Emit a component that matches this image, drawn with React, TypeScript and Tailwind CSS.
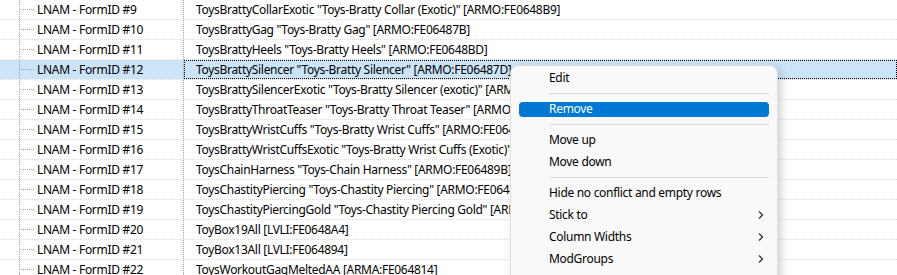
const rows = [
  { id: 9, text: 'ToysBrattyCollarExotic "Toys-Bratty Collar (Exotic)" [ARMO:FE0648B9]' },
  { id: 10, text: 'ToysBrattyGag "Toys-Bratty Gag" [ARMO:FE06487B]' },
  { id: 11, text: 'ToysBrattyHeels "Toys-Bratty Heels" [ARMO:FE0648BD]' },
  { id: 12, text: 'ToysBrattySilencer "Toys-Bratty Silencer" [ARMO:FE06487D]' },
  { id: 13, text: 'ToysBrattySilencerExotic "Toys-Bratty Silencer (exotic)" [ARMO:FE0648C0]' },
  { id: 14, text: 'ToysBrattyThroatTeaser "Toys-Bratty Throat Teaser" [ARMO:FE06487F]' },
  { id: 15, text: 'ToysBrattyWristCuffs "Toys-Bratty Wrist Cuffs" [ARMO:FE064881]' },
  { id: 16, text: 'ToysBrattyWristCuffsExotic "Toys-Bratty Wrist Cuffs (Exotic)" [ARMO:FE0648C2]' },
  { id: 17, text: 'ToysChainHarness "Toys-Chain Harness" [ARMO:FE06489B]' },
  { id: 18, text: 'ToysChastityPiercing "Toys-Chastity Piercing" [ARMO:FE064883]' },
  { id: 19, text: 'ToysChastityPiercingGold "Toys-Chastity Piercing Gold" [ARMO:FE0648A0]' },
  { id: 20, text: "ToyBox19All [LVLI:FE0648A4]" },
  { id: 21, text: "ToyBox13All [LVLI:FE064894]" },
  { id: 22, text: "ToysWorkoutGagMeltedAA [ARMA:FE064814]" },
];

const SELECTED = 12;

const Chevron = () => (
  <svg width="6" height="10" viewBox="0 0 6 10" className="shrink-0">
    <path d="M1 1.5 L4.5 5 L1 8.5" fill="none" stroke="#333" strokeWidth="1.3" />
  </svg>
);

const Separator = () => (
  <div className="h-[9px] flex items-center pl-[38px] pr-[8px]">
    <div className="h-px w-full bg-[#d9d9d9]" />
  </div>
);

const MenuItem = ({
  label,
  active,
  sub,
}: {
  label: string;
  active?: boolean;
  sub?: boolean;
}) => (
  <div className="h-[22px] flex items-center px-[8px]">
    <div
      className={`flex items-center w-full h-[15px] rounded-[4px] pl-[30px] pr-[5px] ${
        active ? "bg-[#0078d4] text-white" : "text-black"
      }`}
    >
      <span className="flex-1 whitespace-nowrap">{label}</span>
      {sub && <Chevron />}
    </div>
  </div>
);

export default function App() {
  return (
    <div className="relative w-[897px] h-[275px] overflow-hidden bg-white text-[12px] tracking-[-0.3px] text-black font-['Noto_Sans',sans-serif]">
      <div className="flex flex-col">
        {rows.map((r) => {
          const sel = r.id === SELECTED;
          return (
            <div
              key={r.id}
              className="flex h-[20px] border-b border-dotted border-[#dcdcdc]"
            >
              <div
                className={`flex w-[184px] shrink-0 border-r border-dotted border-[#a0a0a0] ${
                  sel ? "bg-[#cce4f7]" : ""
                }`}
              >
                <div className="w-[19px] shrink-0" />
                <div className="w-px self-stretch border-l border-dotted border-[#a0a0a0]" />
                <div className="w-[13px] ml-px mt-[9px] h-px border-t border-dotted border-[#a0a0a0]" />
                <span className="ml-[3px] leading-[19px] whitespace-nowrap">
                  LNAM - FormID #{r.id}
                </span>
              </div>
              <div
                className={`flex-1 min-w-0 whitespace-nowrap overflow-hidden ${
                  sel
                    ? "bg-[#cce4f7] border border-dotted border-black pl-[11px] leading-[17px]"
                    : "leading-[19px] pl-[12px]"
                }`}
              >
                {r.text}
              </div>
            </div>
          );
        })}
      </div>

      <div className="absolute left-[510px] top-[65px] w-[268px] h-[240px] pt-px bg-[#f9f9f9] border border-[#e0e0e0] rounded-[8px] shadow-[3px_3px_8px_rgba(0,0,0,0.18)]">
        <MenuItem label="Edit" />
        <Separator />
        <MenuItem label="Remove" active />
        <Separator />
        <MenuItem label="Move up" />
        <MenuItem label="Move down" />
        <Separator />
        <MenuItem label="Hide no conflict and empty rows" />
        <MenuItem label="Stick to" sub />
        <MenuItem label="Column Widths" sub />
        <MenuItem label="ModGroups" sub />
      </div>
    </div>
  );
}
